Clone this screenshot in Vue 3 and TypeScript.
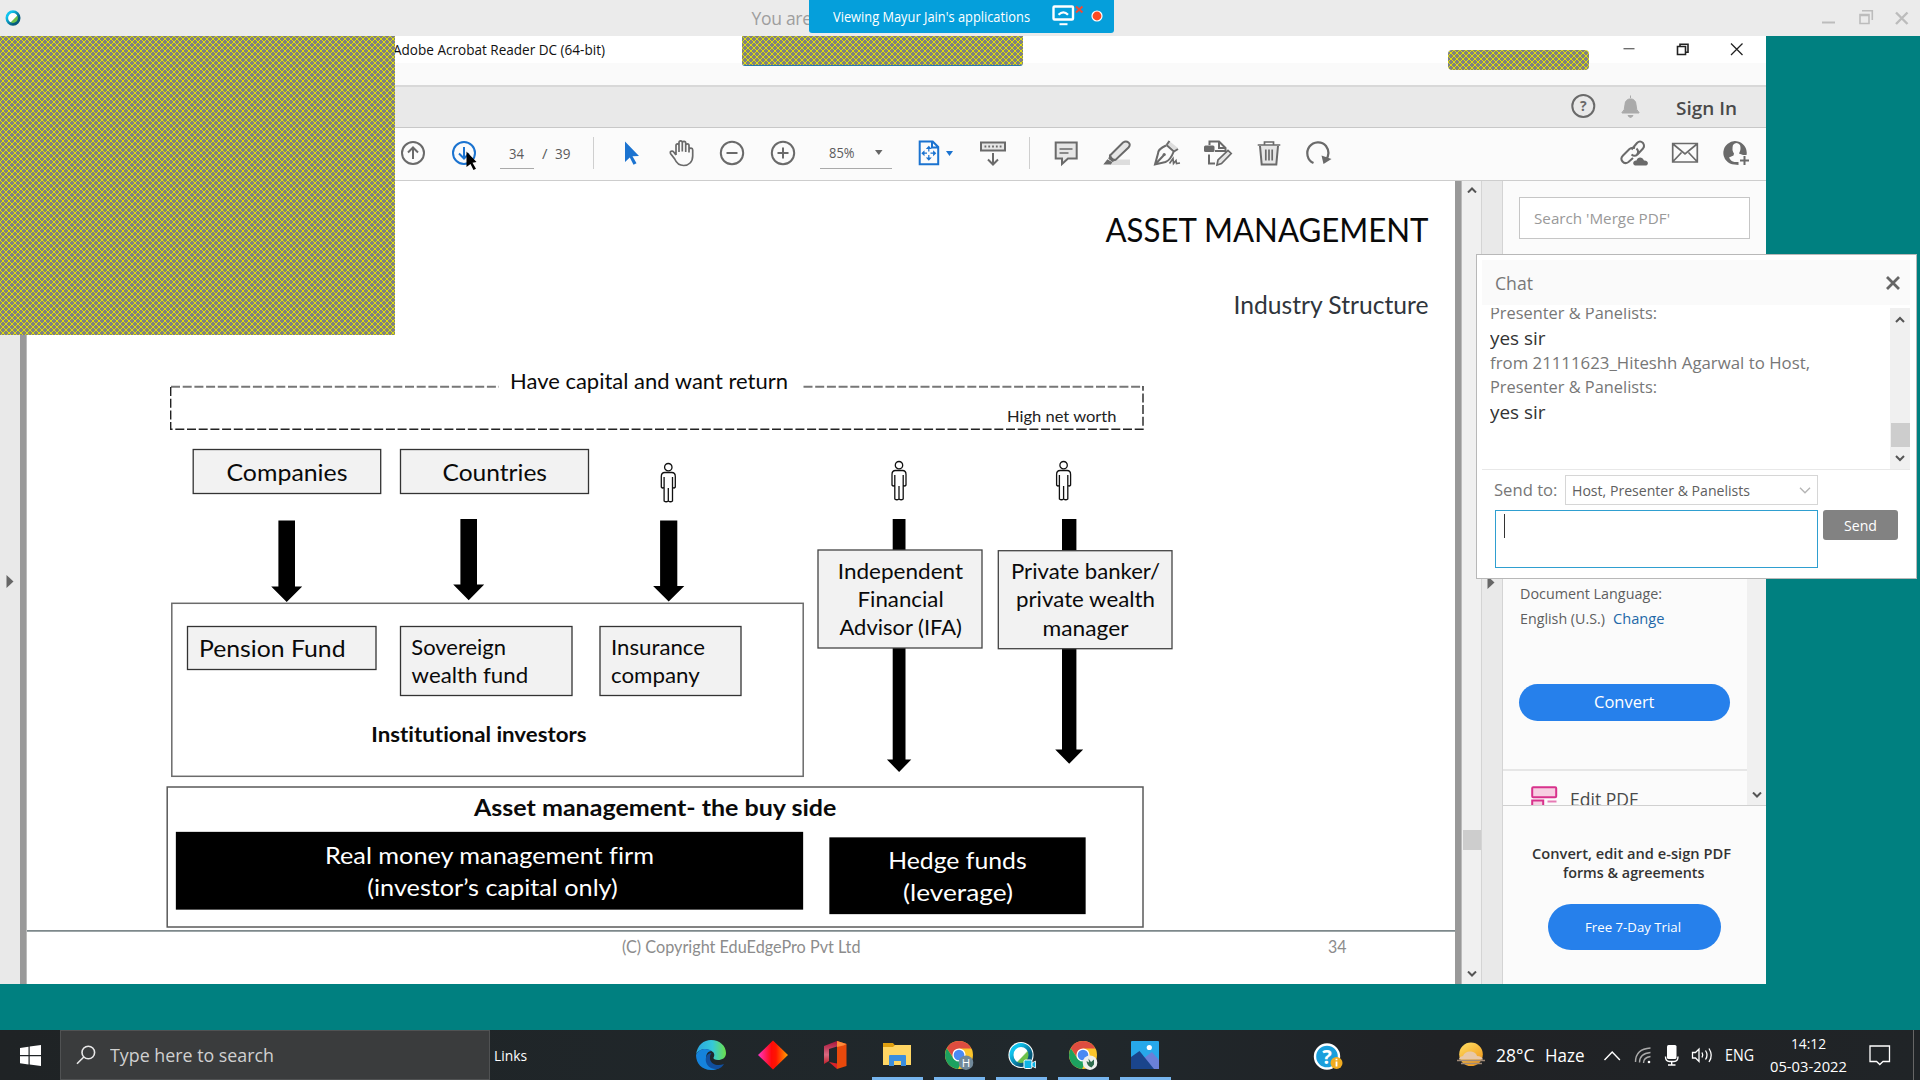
<script setup lang="ts">
import type { Directive } from 'vue'

/* Condenses or widens a label to the given width in pixels. */
const vFit: Directive<HTMLElement, number> = {
  mounted(el, binding) {
    el.style.display = 'inline-block'
    el.style.whiteSpace = 'nowrap'
    el.style.textAlign = 'left'
    const natural = el.getBoundingClientRect().width
    el.style.width = binding.value + 'px'
    el.style.transformOrigin = '0 0'
    el.style.transform = `scaleX(${binding.value / natural})`
  },
}

interface Label { t: string; x: number; y: number; w: number; s: number; c?: string; b?: boolean }
interface Box { x: number; y: number; w: number; h: number; fill: string; stroke: string }
interface Arrow { cx: number; half: number; head: number; top: number; neck: number; tip: number }

const frames: Box[] = [
  { x: 171.8, y: 603.3, w: 631.4, h: 173, fill: 'none', stroke: '#6b6b6b' },
  { x: 167.2, y: 787, w: 975.8, h: 140, fill: 'none', stroke: '#5a5a5a' },
]
const arrows: Arrow[] = [
  { cx: 286.7, half: 8.3, head: 15.5, top: 520.5, neck: 586.4, tip: 602 },
  { cx: 468.7, half: 8.3, head: 15.5, top: 519, neck: 584.6, tip: 600.3 },
  { cx: 668.7, half: 8.6, head: 15.6, top: 520.4, neck: 586, tip: 601.5 },
  { cx: 899.1, half: 6.4, head: 12.2, top: 519, neck: 759.5, tip: 772 },
  { cx: 1069.2, half: 7.2, head: 14, top: 519, neck: 749.5, tip: 763.7 },
]
const boxes: Box[] = [
  { x: 193.2, y: 449.5, w: 187.5, h: 44, fill: '#f2f2f2', stroke: '#333' },
  { x: 400.5, y: 449.5, w: 188, h: 44, fill: '#f2f2f2', stroke: '#333' },
  { x: 187.5, y: 626.5, w: 188.5, h: 43, fill: '#f2f2f2', stroke: '#333' },
  { x: 400.5, y: 626.5, w: 171.5, h: 69, fill: '#f2f2f2', stroke: '#333' },
  { x: 600, y: 626.5, w: 141, h: 69, fill: '#f2f2f2', stroke: '#333' },
  { x: 818, y: 550, w: 164, h: 98, fill: '#f2f2f2', stroke: '#444' },
  { x: 998.3, y: 550.7, w: 173.7, h: 98, fill: '#f2f2f2', stroke: '#444' },
  { x: 176.5, y: 832.5, w: 626, h: 76.5, fill: '#000', stroke: '#000' },
  { x: 830, y: 838, w: 255, h: 75.5, fill: '#000', stroke: '#000' },
]
const people = [[668.3, 463], [899, 461], [1063.6, 461]]

const labels: Label[] = [
  { t: 'ASSET MANAGEMENT', x: 1105.5, y: 241.5, w: 323, s: 32.6 },
  { t: 'Industry Structure', x: 1233.5, y: 313.7, w: 195, s: 24.2, c: '#30353c' },
  { t: 'Have capital and want return', x: 510, y: 388.8, w: 278, s: 20.6 },
  { t: 'High net worth', x: 1007, y: 422.3, w: 109.5, s: 15.2, c: '#222' },
  { t: 'Companies', x: 226.5, y: 480.8, w: 121, s: 22.8 },
  { t: 'Countries', x: 442.5, y: 480.8, w: 104.5, s: 22.8 },
  { t: 'Pension Fund', x: 199, y: 657.4, w: 146.5, s: 22.8 },
  { t: 'Sovereign', x: 411.3, y: 654.5, w: 94.7, s: 20.6 },
  { t: 'wealth fund', x: 411.6, y: 683.2, w: 116.5, s: 20.6 },
  { t: 'Insurance', x: 611, y: 654.5, w: 94, s: 20.6 },
  { t: 'company', x: 611, y: 683, w: 88.8, s: 20.6 },
  { t: 'Independent', x: 837.8, y: 578.5, w: 125.2, s: 20.6 },
  { t: 'Financial', x: 857.5, y: 607, w: 86.2, s: 20.6 },
  { t: 'Advisor (IFA)', x: 839.5, y: 635.3, w: 122.4, s: 20.6 },
  { t: 'Private banker/', x: 1011, y: 579.2, w: 149, s: 20.6 },
  { t: 'private wealth', x: 1016, y: 607.4, w: 139, s: 20.6 },
  { t: 'manager', x: 1042.5, y: 636, w: 86, s: 20.6 },
  { t: 'Institutional investors', x: 371.3, y: 742.2, w: 215.2, s: 20.6, b: true },
  { t: 'Asset management- the buy side', x: 474, y: 816.4, w: 362.4, s: 22.8, b: true },
  { t: 'Real money management firm', x: 325, y: 863.7, w: 329, s: 22.8, c: '#fff' },
  { t: '(investor’s capital only)', x: 367.3, y: 895.5, w: 250.5, s: 22.8, c: '#fff' },
  { t: 'Hedge funds', x: 888.3, y: 869.3, w: 138.3, s: 22.8, c: '#fff' },
  { t: '(leverage)', x: 903, y: 901.2, w: 110, s: 22.8, c: '#fff' },
  { t: '(C) Copyright EduEdgePro Pvt Ltd', x: 622, y: 953, w: 238.5, s: 16.4, c: '#8c8c8c' },
  { t: '34', x: 1328, y: 953, w: 18.5, s: 16.4, c: '#8c8c8c' },
]

const arrowPath = (a: Arrow): string =>
  `M${a.cx - a.half} ${a.top}H${a.cx + a.half}V${a.neck}H${a.cx + a.head}L${a.cx} ${a.tip}L${a.cx - a.head} ${a.neck}H${a.cx - a.half}Z`
</script>

<template>
  <div class="screen">
    <svg class="defs" width="0" height="0">
      <defs>
        <pattern id="hatch" width="6" height="6" patternUnits="userSpaceOnUse">
          <rect width="6" height="6" fill="#808080" />
          <path d="M-1 -1L7 7M7 -1L-1 7" stroke="#dede0a" stroke-width="1" />
        </pattern>
        <linearGradient id="edgeA" x1="0" y1="0" x2="1" y2="0"><stop offset="0" stop-color="#2aa5e0" /><stop offset=".55" stop-color="#35c8d8" /><stop offset="1" stop-color="#6be04a" /></linearGradient>
        <linearGradient id="dia"><stop offset="0" stop-color="#ff35c8" /><stop offset=".45" stop-color="#ff0a0a" /><stop offset=".6" stop-color="#ff1500" /><stop offset="1" stop-color="#ffa400" /></linearGradient>
        <linearGradient id="off" x1="0" y1="0" x2="0" y2="1"><stop offset="0" stop-color="#a8123a" /><stop offset=".6" stop-color="#d86a80" /><stop offset="1" stop-color="#c01f2a" /></linearGradient>
        <linearGradient id="sun" x1="0" y1="0" x2=".6" y2="1"><stop offset="0" stop-color="#ffe066" /><stop offset="1" stop-color="#f29a1c" /></linearGradient>
        <linearGradient id="wbx" x1="0" y1="0" x2="1" y2="1"><stop offset=".2" stop-color="#10c3ee" /><stop offset=".75" stop-color="#055a7c" /></linearGradient>
        <linearGradient id="wbg" x1="0" y1="0" x2="1" y2="1"><stop offset=".55" stop-color="#fff" /><stop offset=".6" stop-color="#6cc04a" /></linearGradient>
      </defs>
    </svg>

    <header class="topbar">
      <svg class="webex" width="16" height="16" viewBox="0 0 16 16"><ellipse cx="8" cy="8" rx="6.2" ry="6.4" fill="url(#wbg)" stroke="url(#wbx)" stroke-width="2.6" /></svg>
      <span class="you">You are</span>
      <svg class="topctl" width="90" height="36" viewBox="1820 0 90 36" fill="none" stroke="#bcbcbc">
        <path d="M1822 22.5h13" stroke-width="2" />
        <path d="M1862 10.8h10.3V20M1860 14.5h9v9h-9zM1859.5 15.5h10" stroke-width="1.6" />
        <path d="M1896 12.5l11.5 11.5M1907.500 12.500L1896 24" stroke-width="2.4" />
      </svg>
    </header>

    <div class="share">
      <span class="share-t"><span v-fit="197">Viewing Mayur Jain's applications</span></span>
      <svg width="56" height="33" viewBox="1050 0 56 33" fill="none">
        <rect x="1053.500" y="6.500" width="19.500" height="13" stroke="#fff" stroke-width="2.400" rx="1" />
        <path d="M1059.500 24.200h8" stroke="#fff" stroke-width="2" />
        <path d="M1058.500 14.800q5-5 9.500 0" stroke="#fff" stroke-width="2.200" />
        <path d="M1076 6.500l6.500 6M1082.500 6.500l-6.500 6" stroke="#ee4a36" stroke-width="2" />
        <circle cx="1097" cy="16" r="5" fill="#ff4a22" stroke="#fff" stroke-width="1.200" />
      </svg>
    </div>

    <main class="desktop">
      <div class="acrobat">
        <div class="titlebar">
          <span class="app-title"><span v-fit="212">Adobe Acrobat Reader DC (64-bit)</span></span>
          <svg width="130" height="27" viewBox="1620 36 130 27" fill="none" stroke="#222" stroke-width="1.300">
            <path d="M1623.500 48.700h11" stroke="#666" />
            <path d="M1677.500 46.500h8v8h-8zM1680 46v-1.700h8v8h-2" stroke-width="1.600" />
            <path d="M1731 43.500l11.500 11.500M1742.500 43.500L1731 55" />
          </svg>
        </div>
        <div class="menubar"></div>
        <div class="tabbar">
          <svg width="70" height="40" viewBox="1570 87 70 40">
            <circle cx="1583.300" cy="106" r="11" fill="none" stroke="#6a6a6a" stroke-width="2" />
            <path d="M1630.500 95.500v2.500M1622 112.500q3-2 3-8c0-7.500 11-7.500 11 0q0 6 3 8v.5h-17zM1628 115.500h5q-2.500 4-5 0z" fill="#aaa" stroke="#aaa" />
            <text x="1583.300" y="111" text-anchor="middle" class="q">?</text>
          </svg>
          <span class="signin"><span v-fit="61">Sign In</span></span>
        </div>
        <div class="toolbar">
          <svg class="ic" viewBox="0 0 30 30"><circle cx="15" cy="15" r="11" /><path d="M15 21V9.500M10 14.500l5-5 5 5" /></svg>
          <svg class="ic i-down" viewBox="0 0 30 30"><circle cx="15" cy="15" r="11" /><path d="M15 9v11M10 15.500l5 5 5-5" /></svg>
          <div class="field pageno"><span v-fit="15">34</span></div>
          <div class="total"><span>/</span><span v-fit="15.500">39</span></div>
          <i class="sep"></i>
          <svg class="ic i-sel" viewBox="0 0 30 30"><path d="M8 3.500l14 14.500-6.500.3 4 7-3 1.500-3.700-7.300L8 24z" fill="#1b73d0" stroke="none" /></svg>
          <svg class="ic g20" viewBox="0 0 30 30"><path d="M9 17V7.500c0-2.300 3-2.300 3 0V14M12 13.500V4.500c0-2.300 3.300-2.300 3.300 0V13.500M15.300 5c0-2.300 3.400-2.300 3.400 0V14M18.700 7.500c0-2.300 3.300-2.300 3.300 0V14.500M22 11.500c.5-2 3.700-2 3.700.5V18c0 6-4 9.500-9 9.500s-7.500-3-9-6.500L3.500 15.500c-1-2 1.500-3.200 3-1.800L9 17" stroke-width="1.700" /></svg>
          <svg class="ic g20" viewBox="0 0 30 30"><circle cx="15" cy="15" r="11.200" /><path d="M9.500 15h11" /></svg>
          <svg class="ic g21" viewBox="0 0 30 30"><circle cx="15" cy="15" r="11.200" /><path d="M9.500 15h11M15 9.500v11" /></svg>
          <div class="field zoom"><span v-fit="25.500">85%</span><svg width="8" height="5" viewBox="0 0 8 5"><path d="M0 0h7.500L3.800 5z" fill="#666" /></svg></div>
          <svg class="ic i-fit" viewBox="0 0 30 30">
            <path d="M5.700 3.500h13l5.500 5.500v17.200H5.700zM18 3.500v6h6" />
            <path d="M14.800 10v10.500M9.500 15.200h10.800" stroke-width="1.200" stroke-dasharray="3.500 3.500" />
            <path d="M14.800 7.800l3 3.200h-6zM14.800 22.800l3-3.200h-6zM7.300 15.200l3.200-3v6zM22.300 15.200l-3.200-3v6z" fill="#1b73d0" stroke="none" />
          </svg>
          <svg class="fitcaret" width="7" height="5" viewBox="0 0 7 5"><path d="M0 0h7L3.500 5z" fill="#1b73d0" /></svg>
          <svg class="ic g25" viewBox="0 0 30 30"><path d="M3 4.500h24v8H3z" fill="#e6e6e6" /><path d="M6.500 8.500h17" stroke-dasharray="1.800 2" /><path d="M15 15v11M10 21.500l5 5 5-5" /></svg>
          <i class="sep sep2"></i>
          <svg class="ic g22" viewBox="0 0 30 30"><path d="M4.700 4.500h21v16H17l-6 5.500v-5.500H4.700z" fill="#e6e6e6" /><path d="M8.500 11h13M8.500 15h9" stroke-width="1.400" /></svg>
          <svg class="ic g21" viewBox="0 0 30 30"><path d="M10 21.500h18V27H8z" fill="#ddd" stroke="none" /><path d="M8 17.500L21 4.500q3-2 5.500 0t0 5L14 21.500q-4 1.500-6-4z" fill="#e6e6e6" /><path d="M8 17.500l-1 3 3.500 2.700 3-1.200q-4-.5-5.500-4.500zM5.500 22L2.500 26h6l1-1.500z" fill="#6a6a6a" stroke-width="1.200" /></svg>
          <svg class="ic g20" viewBox="0 0 30 30"><path d="M16 2l10 8-3 2.500L15 6z" fill="#ddd" stroke="none" /><path d="M17.500 3l-3 4M14.500 7l8 7M22 13.500l4-2.500M14 7.500Q6 11 6 15.500L3 26.500l10.500-2.500q5-2 8-10M3.500 26l8.500-9" /><circle cx="12.200" cy="16.500" r="1.600" fill="#6a6a6a" stroke="none" /><path d="M17.500 25.500l3.500-5 .5 5 2.500-3 .5 3 3.500-.5" stroke-width="1.600" /></svg>
          <svg class="ic g21" viewBox="0 0 30 30"><rect x="1" y="7.500" width="10.500" height="6.500" rx="1.500" fill="#6a6a6a" stroke="none" /><path d="M6.500 7V3.500H16l6.500 6.500v3H12M16 4v6h6M6 16.500v9h6" /><path d="M14 27l1-5L25 12.500l3.200 3L18.500 25.500z" fill="#e6e6e6" stroke-width="1.700" /></svg>
          <svg class="ic g21" viewBox="0 0 30 30"><path d="M6 8l1.700 18.500h14.600L24 8" fill="#e6e6e6" /><path d="M3.700 7h22.600M10.500 6.500V4h9v2.500M11.800 11.500v11M15 11.500v11M18.200 11.500v11" stroke-width="1.700" /></svg>
          <svg class="ic g20" viewBox="0 0 30 30"><path d="M9.500 25C3 22 1.500 14 5.500 8.500c4-5 12-6 16.500-.5 4 5.500 2 11 0 14" stroke-width="2.200" /><path d="M17.500 17.500l10 3.500-8 5z" fill="#6a6a6a" stroke="none" /></svg>
          <svg class="ic i-link" viewBox="0 0 30 30"><path d="M12.500 11.500l5.500-6.500q3-3 6 0 2 3 0 5.500l-5.500 6q-3 2.500-6 0M16 10q-3.500-1-5.500 1L4 17.500q-3 3-.5 6t6 .5L14 20M17.500 10.500q3 3 .5 6" /><path d="M16 27.500c-3-1-2-5.500 1.500-5 1-4 6-4 7.500 0 4.500-.5 5 4.500 2 5z" fill="#6a6a6a" stroke="none" /></svg>
          <svg class="ic g21" viewBox="0 0 30 30"><path d="M2.700 5.500h24.600v18.500H2.700zM3 6l12 10L27 6M3 23.500l8.500-9M27 23.500l-8.500-9" stroke-width="1.700" /></svg>
          <svg class="ic g21" viewBox="0 0 30 30"><path d="M13.500 26.500A11.700 11.700 0 1 1 25.500 17h-3.500l-4-1.500q2.500-4 1-8.500-3.500-4-7 0-1.500 5 1 8.500l-.5 2-4.500 2q2 4 5.500 4.500h4v3z" fill="#6a6a6a" stroke="none" /><path d="M23.500 18v9M19 22.500h9" /></svg>
        </div>

        <div class="content">
          <div class="leftnav"><svg width="8" height="13" viewBox="0 0 8 13"><path d="M.5 0L7.500 6.500.5 13z" fill="#666" /></svg></div>
          <div class="edge"></div>
          <svg class="slide" width="1428" height="803" viewBox="27 181 1428 803">
            <path d="M171 386.700H499" stroke="#777" stroke-width="2" stroke-dasharray="9 2.700" fill="none" />
            <path d="M803.500 386.700H1143" stroke="#777" stroke-width="2" stroke-dasharray="9 2.700" fill="none" />
            <path d="M170.700 387V429.200H1143V386" stroke="#222" stroke-width="1.400" stroke-dasharray="9 2.700" fill="none" />
            <rect v-for="(f, i) in frames" :key="'f' + i" :x="f.x" :y="f.y" :width="f.w" :height="f.h" fill="none" :stroke="f.stroke" stroke-width="1.500" />
            <path v-for="(a, i) in arrows" :key="'a' + i" :d="arrowPath(a)" />
            <rect v-for="(b, i) in boxes" :key="'b' + i" :x="b.x" :y="b.y" :width="b.w" :height="b.h" :fill="b.fill" :stroke="b.stroke" stroke-width="1.300" />
            <g v-for="(p, i) in people" :key="'p' + i" :transform="`translate(${p[0]} ${p[1]})`" fill="#fff" stroke="#111" stroke-width="1.300">
              <circle cx="0" cy="4.200" r="3.700" />
              <path d="M-3.500 9.500h7q3.500 0 3.500 4v10.500q-1.500 2-2.800 0V38q-2 1.500-4.200 0V25V38q-2.200 1.500-4.200 0V24q-1.300 2-2.800 0V13.500q0-4 3.500-4zM-4.200 14v10M4.200 14v10" />
            </g>
            <text v-for="l in labels" :key="l.t + l.y" :x="l.x" :y="l.y" :font-size="l.s" :textLength="l.w" lengthAdjust="spacingAndGlyphs" :fill="l.c || '#0a0a0a'" :font-weight="l.b ? 700 : 400">{{ l.t }}</text>
            <path d="M26 930.800H1456" stroke="#7d888b" stroke-width="1.800" />
          </svg>
          <div class="edge"></div>
          <div class="scroll main-scroll">
            <svg width="10" height="6" viewBox="0 0 10 6"><path d="M1 5.500l4-4 4 4" /></svg>
            <i class="thumb"></i>
            <svg width="10" height="6" viewBox="0 0 10 6"><path d="M1 .5l4 4 4-4" /></svg>
          </div>
          <div class="rightnav"><svg width="8" height="13" viewBox="0 0 8 13"><path d="M.5 0L7.500 6.500.5 13z" fill="#666" /></svg></div>
          <aside class="panel">
            <div class="search-row">
              <div class="search"><span v-fit="136">Search 'Merge PDF'</span></div>
            </div>
            <div class="tools">
              <div class="tools-body">
                <div class="lang lang1"><span v-fit="142">Document Language:</span></div>
                <div class="lang"><span v-fit="85">English (U.S.)</span><a v-fit="51.500">Change</a></div>
                <button class="convert"><span v-fit="60.500">Convert</span></button>
                <div class="edit">
                  <svg width="27" height="22" viewBox="0 0 27 22" fill="#f7cfe2" stroke="#d8328c" stroke-width="2"><rect x="1.200" y="1.200" width="24" height="10" rx="1" /><path d="M1.200 22v-7.500h11V22" /><path d="M16.500 15.500h9" stroke="#e67ab4" /></svg>
                  <span class="edit-t"><span v-fit="68">Edit PDF</span></span>
                </div>
              </div>
              <div class="scroll side-scroll"><svg width="10" height="6" viewBox="0 0 10 6"><path d="M1 .5l4 4 4-4" /></svg></div>
            </div>
            <div class="promo">
              <p><span v-fit="199">Convert, edit and e-sign PDF</span></p>
              <p class="p2"><span v-fit="141.500">forms &amp; agreements</span></p>
              <button class="trial"><span v-fit="96">Free 7-Day Trial</span></button>
            </div>
          </aside>
        </div>
      </div>
    </main>

    <svg class="mask m1" width="395" height="299"><rect width="100%" height="100%" fill="url(#hatch)" /></svg>
    <svg class="mask m2" width="281" height="30"><rect width="100%" height="100%" fill="url(#hatch)" /></svg>
    <svg class="mask m3" width="141" height="20"><rect width="100%" height="100%" fill="url(#hatch)" /></svg>
    <svg class="pointer" width="12" height="20" viewBox="0 0 12 20"><path d="M.5.500L10.500 11l-4 .8 3.500 6-2.500 1.200L4.500 13l-4 3z" /></svg>

    <section class="chat">
      <div class="chat-head"><span v-fit="38">Chat</span>
        <svg width="14" height="14" viewBox="0 0 14 14"><path d="M1 1l12 12M13 1L1 13" stroke="#666" stroke-width="2.800" /></svg>
      </div>
      <div class="chat-log">
        <div class="msgs">
          <div class="meta"><span v-fit="167">Presenter &amp; Panelists:</span></div>
          <div class="say"><span v-fit="55.500">yes sir</span></div>
          <div class="meta"><span v-fit="320">from 21111623_Hiteshh Agarwal to Host,</span></div>
          <div class="meta"><span v-fit="167">Presenter &amp; Panelists:</span></div>
          <div class="say"><span v-fit="55.500">yes sir</span></div>
        </div>
        <div class="scroll chat-scroll">
          <svg width="10" height="7" viewBox="0 0 10 7"><path d="M1 6l4-4 4 4" /></svg>
          <i class="thumb"></i>
          <svg width="10" height="7" viewBox="0 0 10 7"><path d="M1 1l4 4 4-4" /></svg>
        </div>
      </div>
      <div class="sendto">
        <span class="sendto-l"><span v-fit="63.500">Send to:</span></span>
        <div class="select"><span v-fit="178">Host, Presenter &amp; Panelists</span>
          <svg width="12" height="7" viewBox="0 0 12 7"><path d="M1 .8l5 5 5-5" fill="none" stroke="#b5b5b5" stroke-width="1.400" /></svg>
        </div>
      </div>
      <div class="compose">
        <div class="input"><i></i></div>
        <button class="send"><span v-fit="33">Send</span></button>
      </div>
    </section>

    <footer class="taskbar">
      <div class="start"><svg width="21" height="21" viewBox="0 0 21 21"><path d="M0 3l8.500-1.200V10H0zM9.700 1.600L21 0v10H9.700zM0 11.200h8.500v8.200L0 18.200zM9.700 11.200H21V21L9.700 19.500z" fill="#fff" /></svg></div>
      <div class="find">
        <svg width="20" height="20" viewBox="0 0 20 20" fill="none" stroke="#e8e8e8" stroke-width="1.600"><circle cx="12.300" cy="7.500" r="6.300" /><path d="M7.800 12L1 18.800" /></svg>
        <span v-fit="164">Type here to search</span>
      </div>
      <span class="links"><span v-fit="33">Links</span></span>
      <div class="apps">
        <div class="app"><svg width="30" height="30" viewBox="0 0 30 30">
          <path d="M0 15C1 5 8 0 15 0c9 0 15 6 15 13 0 5-4 7-8 7-3 0-5-1-4.500-2.500 1.500-2 1-5-2-6.500C10 8 2 9 0 15z" fill="url(#edgeA)" />
          <path d="M0 15C3 8 12 8 15.500 11c-4 0-6 4-5 8 1.500 6 8 9 14 8-3 2.500-6 3-9.500 3C6 30 0 23.500 0 15z" fill="#1583dc" />
          <path d="M10.500 16c-3 7 3 14 11 13 3-.7 5-2.500 6.500-5-6 2.500-13 .5-14-5-.3-3 .5-5 1.500-6-2 0-4 1-5 3z" fill="#114f9e" />
        </svg></div>
        <div class="app"><svg width="30" height="30" viewBox="0 0 30 30"><path d="M15 .5L30 15 15 29.500 0 15z" fill="url(#dia)" /></svg></div>
        <div class="app"><svg width="24" height="30" viewBox="0 0 24 30"><path d="M14 1L1 6v18l5-3V9l8-2.500z" fill="url(#off)" /><path d="M14 1l9.500 3v22L14 29z" fill="#e8490c" /><path d="M14 1l9.500 3-3 1.500L14 7z" fill="#ff8a3a" /><path d="M6 22l8 1.500V29z" fill="#d8232a" /></svg></div>
        <div class="app on"><svg width="28" height="26" viewBox="0 0 28 26"><path d="M0 1h10l2.500 3-2 3H0z" fill="#e0a010" /><path d="M0 5h10l2-2h16v20H0z" fill="#ffd664" /><path d="M6 24V14q0-1 1-1h15q1 0 1 1v10h-5v-5h-7v5z" fill="#3b8ede" /></svg></div>
        <div class="app on"><svg width="30" height="30" viewBox="0 0 30 30">
          <circle cx="15" cy="15" r="14" fill="#fbc52c" /><path d="M15 8.500h12.400A14 14 0 0 0 2.800 8.200l6.200 9z" fill="#de4d40" /><path d="M2.800 8.200A14 14 0 0 0 14 29l5-10-9.500-.5z" fill="#1da15f" />
          <circle cx="15" cy="15" r="6.600" fill="#fff" /><circle cx="15" cy="15" r="5.300" fill="#4a8af4" />
          <circle cx="22" cy="22.700" r="7.300" fill="#70899a" /><text x="22" y="27" text-anchor="middle" font-size="11.500" fill="#fff">H</text>
        </svg></div>
        <div class="app on"><svg width="30" height="30" viewBox="0 0 30 30"><ellipse cx="15" cy="15" rx="12.600" ry="13" fill="#fff" /><ellipse cx="15" cy="15" rx="9.500" ry="10" fill="url(#wbg)" stroke="url(#wbx)" stroke-width="4" /><rect x="18" y="20" width="8" height="8.500" rx="1.500" fill="#0fb5e6" stroke="#fff" /><path d="M26 23l3.500-2v7L26 26z" fill="#0fb5e6" stroke="#fff" stroke-width=".8" /></svg></div>
        <div class="app on"><svg width="30" height="30" viewBox="0 0 30 30">
          <circle cx="15" cy="15" r="14" fill="#fbc52c" /><path d="M15 8.500h12.400A14 14 0 0 0 2.800 8.200l6.200 9z" fill="#de4d40" /><path d="M2.800 8.200A14 14 0 0 0 14 29l5-10-9.500-.5z" fill="#1da15f" />
          <circle cx="15" cy="15" r="6.600" fill="#fff" /><circle cx="15" cy="15" r="5.300" fill="#4a8af4" />
          <circle cx="22" cy="22.700" r="7.300" fill="#eef0ee" /><path d="M18.500 21l2.500 1.500-.5-4 2.500 3.500 3-2.500v5l-2.500 3q-4.500-1.500-5-6.500z" fill="#2f6b4e" />
        </svg></div>
        <div class="app on"><svg width="28" height="28" viewBox="0 0 28 28"><rect width="28" height="28" rx="1" fill="#27a8ea" /><path d="M13 17l8-6 7 8v9H13z" fill="#6a80d8" /><path d="M0 16l8.500-6L23 28H0z" fill="#1a458c" /><circle cx="18.300" cy="6.500" r="2.600" fill="#fff" /></svg></div>
      </div>
      <div class="tray">
        <svg class="help" width="30" height="28" viewBox="0 0 30 28"><circle cx="14" cy="13.500" r="12" fill="#1a9fdc" stroke="#fff" stroke-width="2.400" /><text x="14" y="20.500" text-anchor="middle" font-size="20" font-weight="700" fill="#fff">?</text><circle cx="23.500" cy="20" r="6" fill="#f2ac20" /><path d="M23.500 18.500v5M23.500 15.700v1.500" stroke="#fff" stroke-width="1.800" /></svg>
        <svg class="sun" width="30" height="26" viewBox="0 0 30 26"><circle cx="15" cy="12.300" r="11.800" fill="url(#sun)" /><path d="M3 17.500q0-3 4-3.500 2-5 8-4.500 5 .5 6 4.500 5 0 6 3.500z" fill="#e8c8a8" /><path d="M1 18.500h28M5 21.500h21" stroke="#a08a78" stroke-width="1.600" /></svg>
        <span class="wx"><span v-fit="38.500">28°C</span></span>
        <span class="wx haze"><span v-fit="39.500">Haze</span></span>
        <svg class="sys" width="115" height="26" viewBox="1600 1042 115 26" fill="none" stroke="#fff" stroke-width="1.400">
          <path d="M1604.500 1060l7.700-8 7.700 8" />
          <path d="M1635.500 1062q0-13 15-14M1639.500 1062.500q0-9 11-10M1643.500 1063q0-5.500 7-6.500" stroke="#aaa" /><circle cx="1649" cy="1062" r="1.300" fill="#fff" stroke="none" />
          <rect x="1667" y="1045" width="9.500" height="14" rx="1.500" fill="#fff" stroke="none" /><path d="M1665.500 1056.500q0 5 4 5h4.500q4 0 4-5M1671.700 1061v4M1668 1065h7.500" />
          <path d="M1692.500 1052.500h3l3.500-3.500v12.500l-3.500-3.500h-3zM1702 1052.500q1.500 2.500 0 5M1705.500 1050.500q3 4.500 0 9M1709 1048.500q4.500 7 0 13.500" stroke-width="1.300" />
        </svg>
        <span class="eng"><span v-fit="29">ENG</span></span>
        <div class="clock"><span v-fit="35">14:12</span><span v-fit="77">05-03-2022</span></div>
        <svg class="note" width="22" height="22" viewBox="0 0 22 22"><path d="M1 1h19.500v15.500h-6.500l-3.200 3-3.200-3H1z" fill="none" stroke="#fff" stroke-width="1.300" /></svg>
        <i class="peek"></i>
      </div>
    </footer>
  </div>
</template>

<style>
body { overflow: hidden; }
</style>

<style scoped>
* { box-sizing: border-box; }
.screen { position: relative; width: 1920px; height: 1080px; display: flex; flex-direction: column; overflow: hidden; font-family: "Open Sans", "Noto Sans", sans-serif; }
.screen svg { display: block; flex: none; }
.defs { position: absolute; }
button { border: 0; padding: 0; font: inherit; color: #fff; display: flex; align-items: center; justify-content: center; }
.topbar { flex: none; height: 36px; background: #ebebeb; display: flex; align-items: center; }
.webex { margin-left: 4.500px; }
.you { margin-left: 731px; font-size: 17.500px; line-height: 36px; color: #9e9e9e; letter-spacing: -.3px; }
.topctl { margin-left: auto; margin-right: 10px; }
.share { position: absolute; left: 809px; top: 0; width: 305px; height: 33px; background: #059fdb; border-radius: 0 0 3px 3px; display: flex; color: #fff; }
.share-t { margin-left: 24px; width: 217px; font-size: 14px; line-height: 33px; }
.desktop { flex: none; height: 994px; background: #008080; display: flex; }
.acrobat { width: 1766px; height: 948px; display: flex; flex-direction: column; background: #fff; }
.titlebar { height: 27px; display: flex; justify-content: space-between; padding: 0 16px 0 393px; flex: none; }
.app-title { font-size: 15px; line-height: 26px; color: #111; }
.menubar { height: 24px; flex: none; background: #fafafa; border-bottom: 2px solid #d8d8d8; }
.tabbar { height: 41px; flex: none; background: #e9e9e9; border-bottom: 1px solid #c8c8c8; display: flex; padding-left: 1570px; }
.q { font-size: 14px; font-weight: 700; fill: #6a6a6a; }
.signin { margin-left: 36px; font-size: 17.500px; font-weight: 600; line-height: 42px; color: #4a4a4a; }
.toolbar { height: 53px; flex: none; background: #fbfbfb; border-bottom: 1px solid #cdcdcd; display: flex; align-items: center; padding: 0 0 2px 398px; font-size: 15px; color: #5c5c5c; }
.ic { width: 30px; height: 30px; fill: none; stroke: #6a6a6a; stroke-width: 2; }
.i-down { margin-left: 20.500px; stroke: #1b73d0; }
.field { height: 32px; line-height: 33px; border-bottom: 1px solid #aaa; }
.pageno { width: 34px; margin-left: 21.500px; padding-left: 9px; }
.total { margin-left: 8px; width: 28px; line-height: 33px; display: flex; gap: 7px; }
.sep { width: 1px; height: 32px; margin-left: 22.500px; background: #cfcfcf; }
.i-sel { margin-left: 23px; }
.g20 { margin-left: 20px; } .g21 { margin-left: 21px; } .g22 { margin-left: 21.500px; } .g25 { margin-left: 24.500px; }
.zoom { margin-left: 22px; width: 72px; padding: 0 9px; display: flex; align-items: center; justify-content: space-between; }
.i-fit { margin-left: 22px; stroke: #1b73d0; }
.fitcaret { margin-left: 2.500px; }
.sep2 { margin-left: 21px; }
.i-link { margin-left: 284.500px; }
.content { height: 803px; flex: none; display: flex; background: #fff; }
.leftnav { flex: none; width: 20px; background: #e9e9e9; padding: 394px 0 0 6px; }
.edge { width: 7px; background: #999; flex: none; border-right: 1px solid #bbb; }
.slide text { font-family: Lato, "Open Sans", sans-serif; white-space: pre; font-variant-ligatures: none; }
.scroll { background: #f0f0f0; display: flex; flex-direction: column; align-items: center; flex: none; }
.scroll path { fill: none; stroke: #555; stroke-width: 2; }
.thumb { display: block; background: #cdcdcd; }
.main-scroll { width: 19px; padding: 6px 0 7px; }
.main-scroll .thumb { width: 18px; height: 20px; margin: 637px 0 121px; }
.rightnav { flex: none; width: 21.500px; background: #e9e9e9; border: solid #d4d4d4; border-width: 0 1px; padding: 395px 0 0 5px; }
.panel { flex: 1; min-width: 0; background: #fbfbfb; display: flex; flex-direction: column; }
.search-row { height: 74px; flex: none; padding: 16px 0 0 16px; }
.tools { height: 550px; flex: none; display: flex; overflow: hidden; }
.tools-body { flex: 1; min-width: 0; }
.search { width: 231px; height: 42px; border: 1px solid #c6c6c6; background: #fff; padding-left: 14px; font-size: 15px; line-height: 40px; color: #999; }
.lang { display: flex; gap: 8px; padding-left: 17px; font-size: 14.500px; line-height: 24.500px; height: 24.500px; color: #5e5e5e; }
.lang a { color: #2368a8; }
.lang1 { margin-top: 327px; }
.convert { margin: 53px 0 0 16.500px; width: 211px; height: 37px; border-radius: 19px; background: #2680eb; font-size: 17px; line-height: 35px; align-items: flex-start; }
.edit { margin-top: 48px; border-top: 2px solid #e6e6e6; padding: 15px 0 0 28px; display: flex; height: 60px; width: 244px; }
.edit-t { margin-left: 12px; font-size: 17.500px; line-height: 27px; color: #4a4a4a; }
.side-scroll { width: 19px; justify-content: flex-end; padding-bottom: 7px; }
.promo { flex: 1; border-top: 1px solid #d0d0d0; text-align: center; font-size: 14px; color: #333; font-weight: 600; padding-top: 39px; }
.promo p { margin: 0; padding-right: 5px; line-height: 18.500px; height: 18.500px; }
.promo .p2 { padding-right: 1px; }
.trial { margin: 21.500px 0 0 45px; width: 173px; height: 46px; border-radius: 23px; background: #2680eb; font-size: 13px; font-weight: 400; padding-right: 2px; }
.mask { position: absolute; }
.m1 { left: 0; top: 36px; }
.m2 { left: 742px; top: 36px; border-radius: 0 0 3px 3px; border-bottom: 1px solid #2a7aa8; }
.m3 { left: 1448px; top: 50px; border-radius: 4px; }
.pointer { position: absolute; left: 466px; top: 151px; }
.chat { position: absolute; left: 1476px; top: 254px; width: 441px; height: 325px; background: #fff; border: 1px solid #b8b8b8; padding: 5px 6px 0 5px; display: flex; flex-direction: column; color: #777; }
.chat-head { height: 45px; background: #fafafa; display: flex; justify-content: space-between; align-items: center; padding: 0 10px 0 12.500px; font-size: 18.500px; }
.chat-log { margin-top: 3px; height: 162px; border-bottom: 1px solid #e8e8e8; display: flex; overflow: hidden; }
.msgs { flex: 1; padding-left: 7.500px; margin-top: -7px; }
.meta { height: 24px; line-height: 24px; font-size: 16px; }
.say { height: 26px; line-height: 27px; font-size: 18px; color: #333; }
.chat-scroll { width: 20px; padding: 8px 0 7px; }
.chat-scroll .thumb { width: 19px; height: 25px; margin: 100px 0 8px; }
.sendto { display: flex; margin-top: 5px; padding-left: 12px; }
.sendto-l { width: 70.500px; line-height: 30px; font-size: 17px; }
.select { width: 253px; height: 30px; border: 1px solid #d6d6d6; display: flex; align-items: center; justify-content: space-between; padding: 0 6px; font-size: 15px; line-height: 27px; color: #606060; }
.compose { display: flex; margin-top: 5px; padding-left: 12.500px; }
.input { width: 323.500px; height: 58px; border: 1.500px solid #2f9fd0; padding: 3px 0 0 8px; }
.input i { display: block; width: 1.500px; height: 24px; background: #333; }
.send { margin-left: 4.500px; width: 75px; height: 30px; border-radius: 3px; background: #828282; font-size: 14px; }
.taskbar { flex: none; height: 50px; background: linear-gradient(90deg, #1f2325, #20282c 55%, #202225 75%, #202427); display: flex; align-items: center; color: #fff; }
.start { width: 60px; display: flex; justify-content: center; }
.find { width: 430px; height: 50px; background: #3a3c3d; border: 1px solid #505253; display: flex; align-items: center; padding-left: 15px; gap: 14px; font-size: 18px; color: #d0d0d0; }
.links { margin-left: 4px; font-size: 14px; width: 186px; }
.apps { display: flex; height: 50px; }
.app { width: 62px; display: flex; align-items: center; justify-content: center; }
.app.on { position: relative; }
.app.on::after { content: ""; position: absolute; left: 6px; right: 5px; bottom: 0; height: 3px; background: #76b5ee; }
.tray { display: flex; align-items: center; height: 50px; flex: 1; }
.help { margin-left: 137px; margin-top: 3px; }
.sun { margin-left: 113px; }
.wx { font-size: 18px; margin-left: 9.500px; line-height: 51px; }
.haze { margin-left: 10.500px; }
.sys { margin-left: 15.500px; }
.eng { margin-left: 10.500px; font-size: 15.500px; }
.clock { margin-left: 15.500px; width: 77px; display: flex; flex-direction: column; align-items: center; font-size: 15px; line-height: 23px; }
.note { margin-left: 22px; margin-top: 2px; }
.peek { margin-left: 22.500px; width: 1px; height: 50px; background: #666; }
</style>
